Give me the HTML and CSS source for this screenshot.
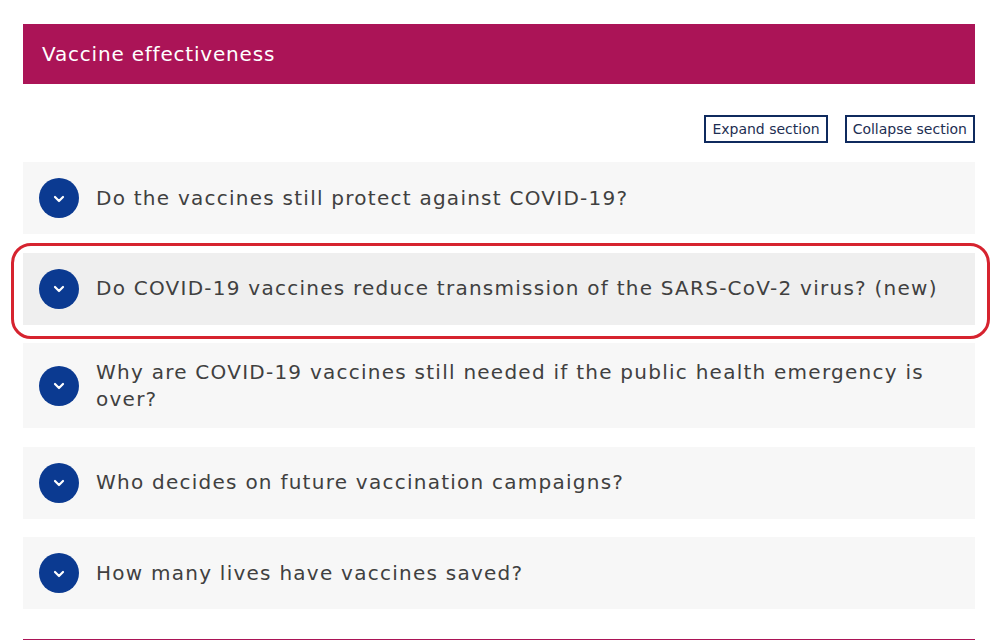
FILE: index.html
```html
<!DOCTYPE html>
<html lang="en">
<head>
<meta charset="utf-8">
<title>Vaccine effectiveness</title>
<link rel="stylesheet" href="styles.css">
</head>
<body>
<main class="page">
  <section class="section">
    <h2 class="section-title">Vaccine effectiveness</h2>
    <div class="tools">
      <button class="tool-btn">Expand section</button>
      <button class="tool-btn">Collapse section</button>
    </div>
    <div class="accordion">
      <div class="item">
        <span class="toggle"><svg width="12" height="8" viewBox="0 0 12 8"><polyline points="2,2 6,6 10,2" fill="none" stroke="#fff" stroke-width="2.2" stroke-linecap="round" stroke-linejoin="round"/></svg></span>
        <span class="question">Do the vaccines still protect against COVID-19?</span>
      </div>
      <div class="item item-active">
        <span class="toggle"><svg width="12" height="8" viewBox="0 0 12 8"><polyline points="2,2 6,6 10,2" fill="none" stroke="#fff" stroke-width="2.2" stroke-linecap="round" stroke-linejoin="round"/></svg></span>
        <span class="question">Do COVID-19 vaccines reduce transmission of the SARS-CoV-2 virus? (new)</span>
        <span class="highlight"></span>
      </div>
      <div class="item">
        <span class="toggle"><svg width="12" height="8" viewBox="0 0 12 8"><polyline points="2,2 6,6 10,2" fill="none" stroke="#fff" stroke-width="2.2" stroke-linecap="round" stroke-linejoin="round"/></svg></span>
        <span class="question">Why are COVID-19 vaccines still needed if the public health emergency is over?</span>
      </div>
      <div class="item">
        <span class="toggle"><svg width="12" height="8" viewBox="0 0 12 8"><polyline points="2,2 6,6 10,2" fill="none" stroke="#fff" stroke-width="2.2" stroke-linecap="round" stroke-linejoin="round"/></svg></span>
        <span class="question">Who decides on future vaccination campaigns?</span>
      </div>
      <div class="item">
        <span class="toggle"><svg width="12" height="8" viewBox="0 0 12 8"><polyline points="2,2 6,6 10,2" fill="none" stroke="#fff" stroke-width="2.2" stroke-linecap="round" stroke-linejoin="round"/></svg></span>
        <span class="question">How many lives have vaccines saved?</span>
      </div>
    </div>
  </section>
  <div class="section-bar"></div>
</main>
</body>
</html>
```
FILE: styles.css
```css
html, body {
  margin: 0;
  padding: 0;
  background: #fff;
  overflow: hidden;
}
body {
  font-family: "DejaVu Sans", Verdana, sans-serif;
  color: #404040;
}
.page {
  width: 952px;
  margin-left: 23px;
  padding-top: 24px;
}
.section {
  margin-bottom: 30px;
}
.section-title {
  margin: 0;
  height: 60px;
  display: flex;
  align-items: center;
  padding-left: 19px;
  background: #ab1457;
  color: #fff;
  font-size: 20px;
  letter-spacing: 0.8px;
  font-weight: normal;
}
.section-bar {
  height: 60px;
  background: #ab1457;
}
.tools {
  display: flex;
  justify-content: flex-end;
  gap: 17px;
  margin-top: 31px;
  margin-bottom: 19px;
}
.tool-btn {
  font-family: "DejaVu Sans", Verdana, sans-serif;
  font-size: 14px;
  color: #1d2e52;
  background: #fff;
  border: 2px solid #0f2a5e;
  height: 28px;
  padding: 0 6px;
  margin: 0;
  line-height: 24px;
}
.accordion {
  display: flex;
  flex-direction: column;
  gap: 18.5px;
}
.item {
  position: relative;
  display: flex;
  align-items: center;
  gap: 17px;
  padding: 16px;
  background: #f7f7f7;
}
.item-active {
  background: #efefef;
}
.toggle {
  flex: none;
  width: 40px;
  height: 40px;
  border-radius: 50%;
  background: #0b3a91;
  display: flex;
  align-items: center;
  justify-content: center;
}
.toggle svg {
  display: block;
  margin-top: 1px;
}
.question {
  font-size: 20px;
  letter-spacing: 1.25px;
  line-height: 26.5px;
  color: #404040;
}
.highlight {
  position: absolute;
  left: -12px;
  right: -15px;
  top: -10px;
  bottom: -14px;
  border: 3px solid #d6232f;
  border-radius: 20px;
  pointer-events: none;
}
```
